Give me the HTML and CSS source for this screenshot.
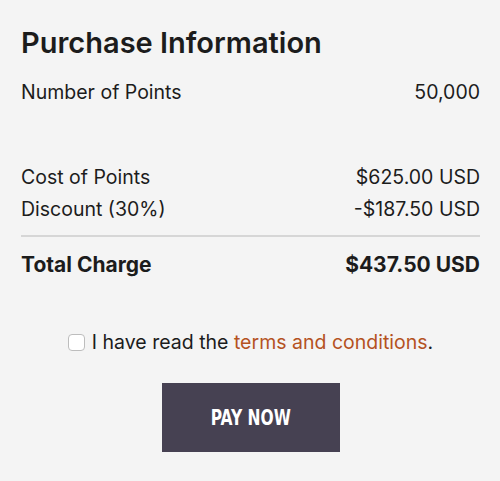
FILE: index.html
```html
<!DOCTYPE html>
<html lang="en">
<head>
    <meta charset="UTF-8">
    <meta name="viewport" content="width=device-width, initial-scale=1.0">
    <title>Purchase Information</title>
    <link rel="stylesheet" href="styles.css">
</head>

<body>
    <div id="purchase">
        <h1>Purchase Information</h1>

        <div class="row">
            <span>Number of Points</span>
            <span>50,000</span>
        </div>

        <div class="costs">
            <div class="row">
                <span>Cost of Points</span>
                <span>$625.00 USD</span>
            </div>
            <div class="row">
                <span>Discount (30%)</span>
                <span>-$187.50 USD</span>
            </div>
        </div>

        <div class="row total">
            <span>Total Charge</span>
            <span>$437.50 USD</span>
        </div>

        <label class="terms">
            <input type="checkbox" class="check">
            <span>I have read the <a href="#">terms and conditions</a>.</span>
        </label>

        <button class="pay"><span class="pay-label">PAY NOW</span></button>
    </div>
</body>
</html>
```

FILE: styles.css
```css
body {
    font-family: Inter, "Noto Sans", sans-serif;
    background-color: #f4f4f4;
    color: #1c1c1c;
    margin: 0;
    padding: 0;
}

#purchase {
    display: flex;
    flex-direction: column;
    padding: 25px 20px 0 21px;
}

h1 {
    font-size: 29px;
    font-weight: 600;
    line-height: 36px;
    margin: 0 0 15px 0;
}

.row {
    display: flex;
    justify-content: space-between;
    font-size: 19.5px;
    line-height: 32px;
}

.costs {
    margin-top: 53px;
    padding-bottom: 10px;
    border-bottom: 2px solid #d6d6d6;
}

.total {
    margin-top: 12px;
    font-weight: 700;
    font-size: 21px;
}

.terms {
    display: flex;
    align-items: center;
    justify-content: center;
    gap: 7px;
    margin-top: 49px;
    font-size: 19.5px;
    line-height: 24px;
}

.terms a {
    color: #b4521f;
    text-decoration: none;
}

.check {
    appearance: none;
    width: 17px;
    height: 17px;
    margin: 0;
    border: 1px solid #bdbdbd;
    border-radius: 4px;
    background: #fff;
}

.pay {
    align-self: center;
    margin-top: 29px;
    width: 178px;
    height: 69px;
    border: none;
    background: #464152;
    color: #fff;
    font-family: "DejaVu Sans", sans-serif;
    font-stretch: condensed;
    font-weight: 700;
    font-size: 21px;
}

.pay-label {
    display: inline-block;
    transform: scaleX(0.82);
}
```
